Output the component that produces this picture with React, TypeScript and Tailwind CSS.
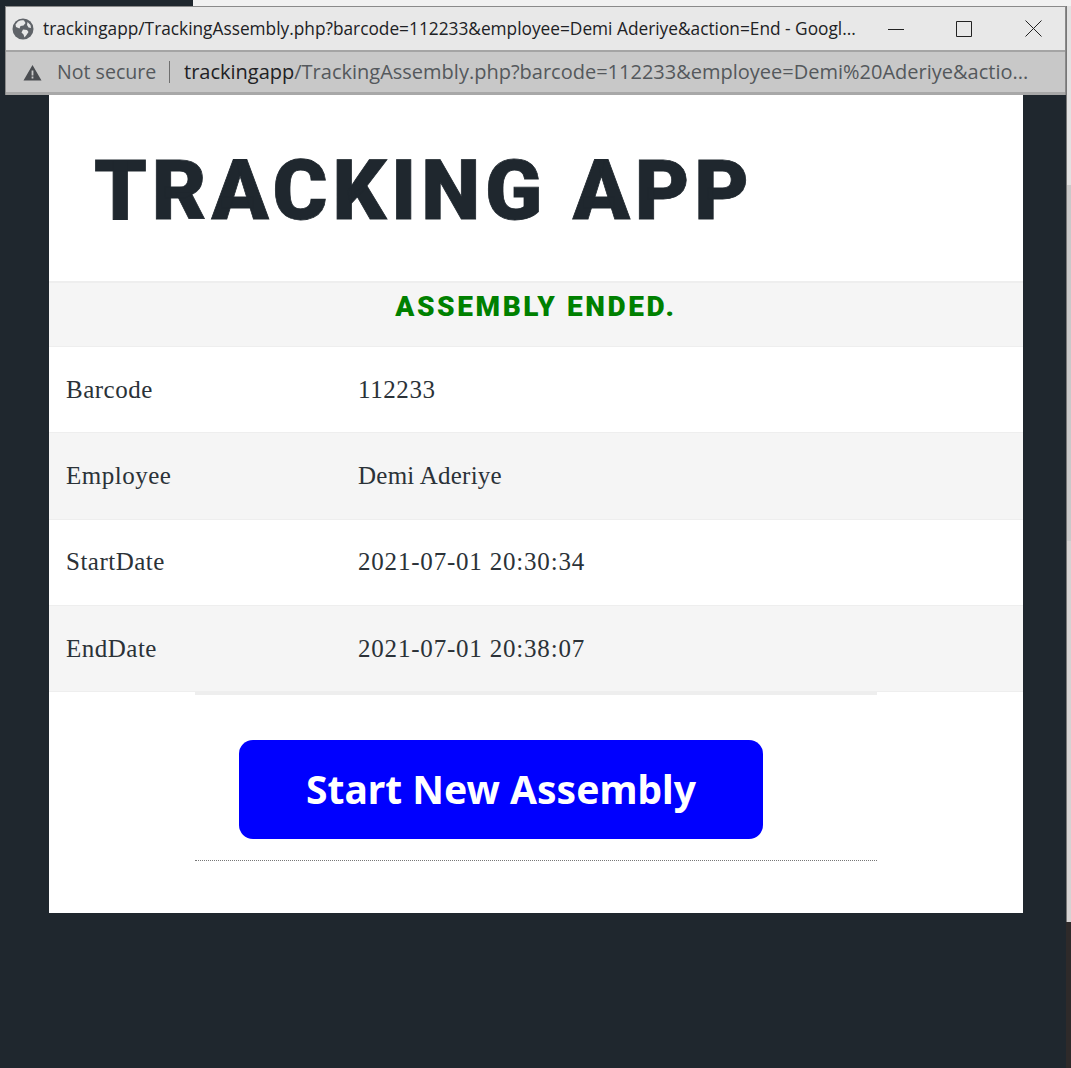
const rows = [
  { label: 'Barcode', value: '112233', valueClass: 'tracking-[0.6px]' },
  { label: 'Employee', value: 'Demi Aderiye', valueClass: 'tracking-[0.25px]' },
  { label: 'StartDate', value: '2021-07-01 20:30:34', valueClass: 'tracking-[0.8px]' },
  { label: 'EndDate', value: '2021-07-01 20:38:07', valueClass: 'tracking-[0.8px]' },
];

function GlobeIcon() {
  return (
    <svg width="22" height="22" viewBox="0 0 22 22" className="shrink-0">
      <circle cx="11" cy="11" r="10.5" fill="#5f6368" />
      <path fill="#e8e8e8" d="M6 3.5c2-1 4-1.5 6-1l1.5 2.5-2 2.5-3 .5-1 2.5L4 9 3.5 6.5ZM11 11.5l4 .5 1.5 2-2 3-2 2.5-1-3-2-2ZM15.5 4l3 3 .5 3-2.5-.5-1.5-2.5Z" />
    </svg>
  );
}

export default function App() {
  return (
    <div className="relative h-[1068px] w-full overflow-hidden bg-[#1f272e] font-['Liberation_Sans',sans-serif]">
      {/* edges of the windows behind */}
      <div className="absolute right-0 top-0 h-[6px] w-[878px] bg-[#f1f1f1]" />
      <div className="absolute right-0 top-[6px] flex h-[916px] w-[5px] flex-col border-l border-[#777777]">
        <div className="h-[179px] bg-[#e2e2e2]" />
        <div className="h-[356px] bg-[#c9c9c9]" />
        <div className="flex-1 bg-[#d6d3d3]" />
      </div>
      <div className="absolute right-0 top-[922px] h-[146px] w-[5px] bg-[#2e2a2a]" />

      {/* browser chrome */}
      <div className="relative mx-[5px] mt-[6px] flex h-[89px] flex-col border-x border-t border-[#8a8a8a]">
        <div className="flex h-[43px] items-center bg-[#e8e8e8] pl-[6px]">
          <GlobeIcon />
          <span className="ml-[9px] w-[818px] truncate font-['Open_Sans',sans-serif] text-[17.3px] text-[#202124]">
            trackingapp/TrackingAssembly.php?barcode=112233&amp;employee=Demi Aderiye&amp;action=End - Googl...
          </span>
          <svg width="16" height="16" viewBox="0 0 16 16" className="ml-[27px] shrink-0 text-[#222]">
            <path d="M0 8.5h16" stroke="currentColor" />
          </svg>
          <svg width="16" height="16" viewBox="0 0 16 16" className="ml-[52px] shrink-0 text-[#222]">
            <path d="M.5.5h15v15H.5Z" fill="none" stroke="currentColor" />
          </svg>
          <svg width="17" height="17" viewBox="0 0 17 17" className="ml-[53px] shrink-0 text-[#222]">
            <path d="M.5.5l16 16M16.5.5l-16 16" stroke="currentColor" />
          </svg>
        </div>
        <div className="h-[2px] bg-[#a4a4a4]" />
        <div className="flex h-[43px] items-center border-b-[3px] border-[#a8a8a8] bg-[#c8c8c8] pl-[17px] font-['Open_Sans',sans-serif] text-[20px]">
          <svg width="19" height="17" viewBox="0 0 19 17" className="shrink-0 text-[#4a4d51]">
            <path fill="currentColor" d="M9.5 1 18.5 16.5H.5ZM8.6 6.5v5h1.8v-5ZM8.6 12.5v2h1.8v-2Z" fillRule="evenodd" />
          </svg>
          <span className="ml-[15px] w-[100px] whitespace-nowrap text-[19.6px] text-[#54585c]">Not secure</span>
          <span className="ml-[12px] h-[22px] w-px bg-[#6f6f6f]" />
          <span className="ml-[14px] w-[852px] truncate text-[#202124]">
            trackingapp<span className="text-[#54585c]">/TrackingAssembly.php?barcode=112233&amp;employee=Demi%20Aderiye&amp;actio...</span>
          </span>
        </div>
      </div>

      {/* page card */}
      <div className="ml-[49px] mr-[48px] h-[818px] bg-white">
        <div className="flex h-[188px] items-center border-b-2 border-[#eeeeee] pl-[45px] pt-[5px]">
          <h1 className="font-['Roboto',sans-serif] text-[84px] font-black leading-none tracking-[4.8px] text-[#1f272e] [-webkit-text-stroke:0.8px_#1f272e]">
            TRACKING APP
          </h1>
        </div>
        <div className="flex h-[64px] justify-center border-b border-[#eeeeee] bg-[#f5f5f5] pt-[6px]">
          <span className="font-['Roboto',sans-serif] text-[28px] font-black leading-[36px] tracking-[2.6px] text-[#008000]">
            ASSEMBLY ENDED.
          </span>
        </div>
        {rows.map((row, i) => (
          <div
            key={row.label}
            className={`flex h-[86.25px] items-center border-b border-[#eeeeee] pl-[17px] font-['Liberation_Serif',serif] text-[25px] text-[#2b3238] ${
              i % 2 === 1 ? 'bg-[#f5f5f5]' : 'bg-white'
            }`}
          >
            <span className="w-[292px] tracking-[0.5px]">{row.label}</span>
            <span className={row.valueClass}>{row.value}</span>
          </div>
        ))}
        <div className="mx-[146px] h-[3px] bg-[#eeeeee]" />
        <div className="mx-[146px] border-b border-dotted border-[#777777] pb-[21px] pt-[45px]">
          <div className="ml-[44px] flex h-[99px] w-[524px] items-center justify-center rounded-[14px] bg-[#0000ff] font-['Noto_Sans',sans-serif] text-[39px] font-bold text-white">
            Start New Assembly
          </div>
        </div>
      </div>
    </div>
  );
}
